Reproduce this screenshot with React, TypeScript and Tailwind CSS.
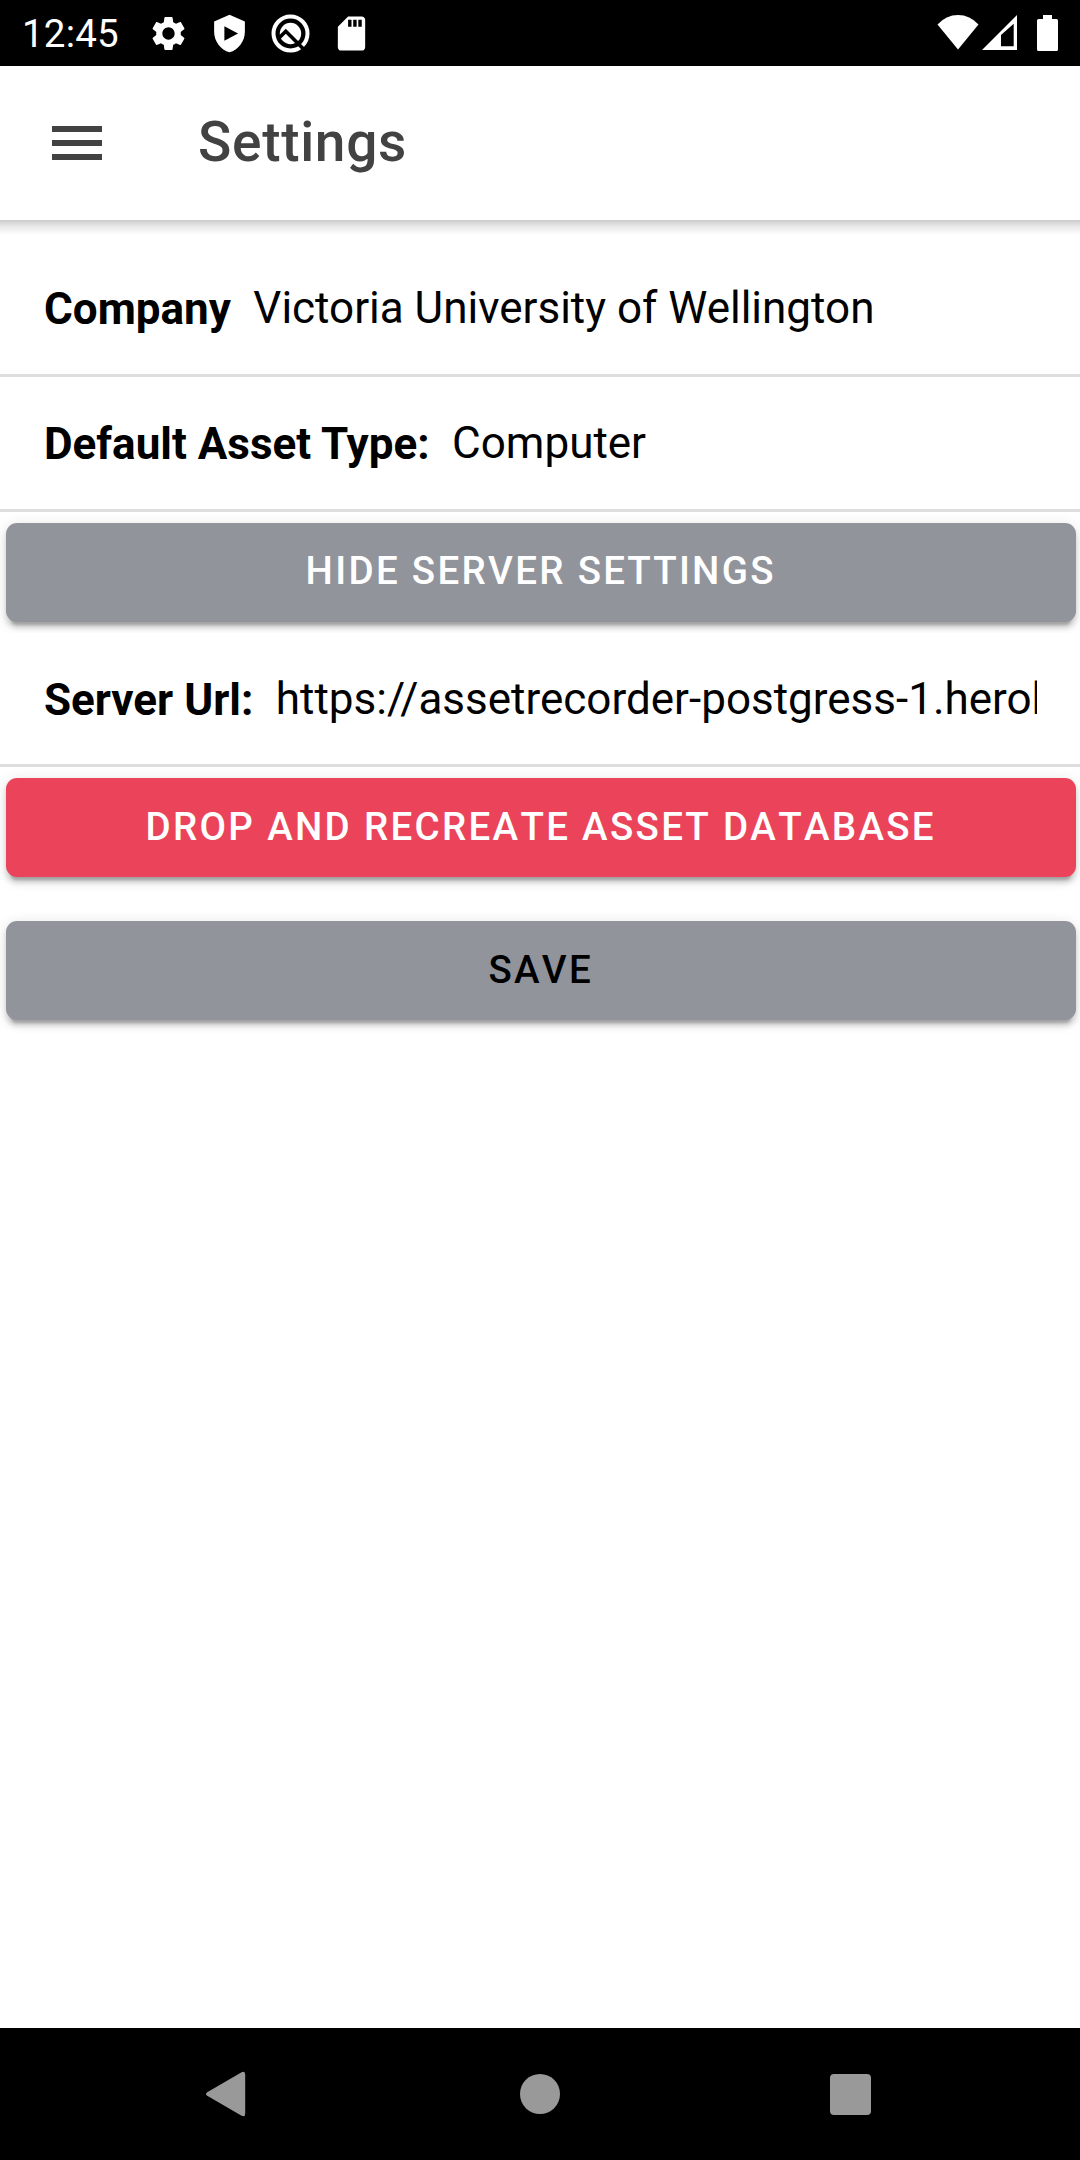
import type { ReactNode } from "react";

function StatusBar() {
  return (
    <div className="flex h-[66px] shrink-0 items-center justify-between bg-black pl-[22px] pr-[22px] text-white">
      <div className="flex items-center">
        <span className="relative top-px w-[126px] text-[38.5px] leading-[66px] tracking-[0.2px]">12:45</span>
        <div className="flex items-center gap-[20px] [&>svg]:h-[41px] [&>svg]:w-[41px]">
          <svg viewBox="0 0 24 24" fill="currentColor">
            <path d="M19.14 12.94c.04-.3.06-.61.06-.94 0-.32-.02-.64-.07-.94l2.03-1.58c.18-.14.23-.41.12-.61l-1.92-3.32c-.12-.22-.37-.29-.59-.22l-2.39.96c-.5-.38-1.03-.7-1.62-.94l-.36-2.54c-.04-.24-.24-.41-.48-.41h-3.84c-.24 0-.43.17-.47.41l-.36 2.54c-.59.24-1.13.57-1.62.94l-2.39-.96c-.22-.08-.47 0-.59.22L2.74 8.87c-.12.21-.08.47.12.61l2.03 1.58c-.05.3-.09.63-.09.94s.02.64.07.94l-2.03 1.58c-.18.14-.23.41-.12.61l1.92 3.32c.12.22.37.29.59.22l2.39-.96c.5.38 1.03.7 1.62.94l.36 2.54c.05.24.24.41.48.41h3.84c.24 0 .44-.17.47-.41l.36-2.54c.59-.24 1.13-.56 1.62-.94l2.39.96c.22.08.47 0 .59-.22l1.92-3.32c.12-.22.07-.47-.12-.61l-2.01-1.58zM12 15.6c-1.98 0-3.6-1.62-3.6-3.6s1.62-3.6 3.6-3.6 3.6 1.62 3.6 3.6-1.62 3.6-3.6 3.6z" />
          </svg>
          <svg viewBox="0 0 24 24" fill="currentColor">
            <path
              fillRule="evenodd"
              d="M12 1 3 5v6c0 5.55 3.84 10.74 9 12 5.16-1.26 9-6.45 9-12V5zM9 7.8v8.4l8-4.2z"
            />
          </svg>
          <svg viewBox="0 0 41 41" fill="none">
            <circle cx="20.5" cy="20.5" r="17" stroke="currentColor" strokeWidth="4" />
            <circle cx="20.5" cy="20.5" r="10.7" fill="currentColor" />
            <path d="M8.5 25.5 15.8 18.2 33.5 36" stroke="#000" strokeWidth="3.6" />
          </svg>
          <svg viewBox="0 0 24 24" fill="currentColor">
            <path d="M18 2h-8L4.02 8 4 20c0 1.1.9 2 2 2h12c1.1 0 2-.9 2-2V4c0-1.1-.9-2-2-2zm-6 6h-2V4h2v4zm3 0h-2V4h2v4zm3 0h-2V4h2v4z" />
          </svg>
        </div>
      </div>
      <div className="flex items-center">
        <svg className="h-[36px] w-[42px]" viewBox="0 0 42 36" fill="currentColor">
          <path d="M0.5 9.5Q9 0 21 0T41.5 9.5L21 34.6z" />
        </svg>
        <svg className="ml-[3px] h-[36px] w-[35px]" viewBox="0 0 35 36" fill="currentColor">
          <path fillRule="evenodd" d="M0 35 35 0V35zM19 20V31.3H31.7V8.7z" />
        </svg>
        <svg className="ml-[20px] h-[36px] w-[21px]" viewBox="0 0 21 36" fill="currentColor">
          <path d="M6 0h9v4h4.4q1.6 0 1.6 1.6v28.8q0 1.6-1.6 1.6H1.6Q0 36 0 34.4V5.6Q0 4 1.6 4H6z" />
        </svg>
      </div>
    </div>
  );
}

function Header() {
  return (
    <header className="relative z-10 flex h-[154px] shrink-0 items-center bg-white pl-[52px] text-[#424242]">
      <button aria-label="Menu" className="flex w-[50px] flex-col gap-[8px]">
        <span className="h-[6px] bg-[#424242]" />
        <span className="h-[6px] bg-[#424242]" />
        <span className="h-[6px] bg-[#424242]" />
      </button>
      <h1 className="mb-[2px] ml-[96px] text-[55px] font-medium leading-[64px] tracking-[0.0125em]">Settings</h1>
      <div className="absolute inset-x-0 top-full h-[14px] bg-linear-to-b from-black/20 via-black/8 to-black/1" />
    </header>
  );
}

function Row({ label, value, className = "h-[135px] pt-[2px]" }: { label: string; value: string; className?: string }) {
  return (
    <div
      className={
        "relative flex items-center border-b-[3px] border-[#dedede] bg-white pl-[44px] pr-[43px] text-[44px] leading-[52px] text-black " +
        className
      }
    >
      <span className="shrink-0 font-bold">{label}</span>
      <span className="mb-[2px] ml-[22.5px] min-w-0 flex-1 overflow-hidden whitespace-nowrap">{value}</span>
    </div>
  );
}

function Button({ className, children }: { className: string; children: ReactNode }) {
  return (
    <button
      className={
        "my-[11px] ml-[6px] mr-[4.5px] flex h-[99px] items-center justify-center rounded-[11px] text-[38.5px] font-medium uppercase leading-none tracking-[0.06em] [font-kerning:none] shadow-[0_8.25px_2.75px_-5.5px_rgba(0,0,0,0.2),0_5.5px_5.5px_0_rgba(0,0,0,0.14),0_2.75px_13.75px_0_rgba(0,0,0,0.12)] " +
        className
      }
    >
      {children}
    </button>
  );
}

function NavBar() {
  return (
    <nav className="flex h-[132px] shrink-0 items-center justify-center bg-black text-[#999999]">
      <div className="flex w-[310px] justify-center">
        <svg className="h-[46px] w-[48px]" viewBox="0 0 48 46" fill="currentColor">
          <path d="M1.2 21.2 35.6 1.3q3.6-1.6 3.6 2.2v39q0 3.8-3.6 2.2L1.2 24.8q-2.4-1.8 0-3.6z" />
        </svg>
      </div>
      <div className="flex w-[310px] justify-center">
        <span className="h-[40px] w-[40px] rounded-full bg-[#999999]" />
      </div>
      <div className="flex w-[310px] justify-center">
        <span className="h-[41px] w-[41px] rounded-[4px] bg-[#999999]" />
      </div>
    </nav>
  );
}

export default function App() {
  return (
    <div className="flex h-[2160px] w-[1080px] flex-col overflow-hidden bg-white font-[Roboto,sans-serif]">
      <StatusBar />
      <Header />
      <main className="flex flex-1 flex-col pt-[22px]">
        <Row label="Company" value="Victoria University of Wellington" />
        <Row label="Default Asset Type:" value="Computer" />
        <Button className="bg-[#92949c] pb-[2px] text-white">Hide server settings</Button>
        <Row
          label="Server Url:"
          value="https://assetrecorder-postgress-1.herokuapp.com"
          className="h-[134px] pt-[3px]"
        />
        <Button className="bg-[#eb445a] text-white">Drop and recreate asset database</Button>
        <div className="mt-[22px] flex flex-col">
          <Button className="bg-[#92949c] text-black">Save</Button>
        </div>
      </main>
      <NavBar />
    </div>
  );
}
